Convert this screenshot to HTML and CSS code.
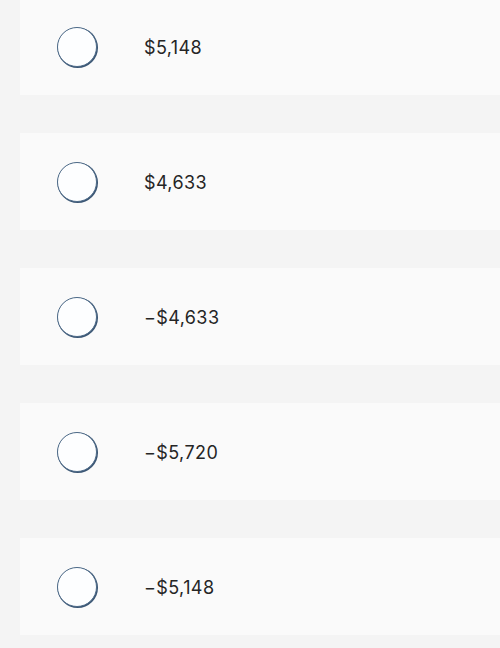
FILE: index.html
```html
<!DOCTYPE html>
<html>
<head>
<meta charset="utf-8">
<link rel="stylesheet" href="styles.css">
</head>
<body>
<div class="options">
  <label class="option"><span class="radio"></span><span class="value">$5,148</span></label>
  <label class="option"><span class="radio"></span><span class="value">$4,633</span></label>
  <label class="option"><span class="radio"></span><span class="value">&minus;$4,633</span></label>
  <label class="option"><span class="radio"></span><span class="value">&minus;$5,720</span></label>
  <label class="option"><span class="radio"></span><span class="value">&minus;$5,148</span></label>
</div>
</body>
</html>
```
FILE: styles.css
```css
html, body {
  margin: 0;
  padding: 0;
  background: #f4f4f4;
}
.options {
  display: flex;
  flex-direction: column;
  gap: 38px;
  padding-left: 20px;
  margin-top: -2px;
}
.option {
  display: flex;
  align-items: center;
  height: 97px;
  background: #fafafa;
  padding-left: 37px;
  box-sizing: border-box;
}
.radio {
  width: 38px;
  height: 38px;
  border-radius: 50%;
  border: 1.5px solid #4d6a88;
  background: #fdfeff;
  box-shadow: 0.7px 0.7px 0 0.3px #3a5573;
  flex: none;
}
.value {
  margin-left: 47px;
  padding-top: 2px;
  font-family: Inter, "Liberation Sans", sans-serif;
  font-size: 18px;
  color: #252525;
  letter-spacing: 0.4px;
}
```
